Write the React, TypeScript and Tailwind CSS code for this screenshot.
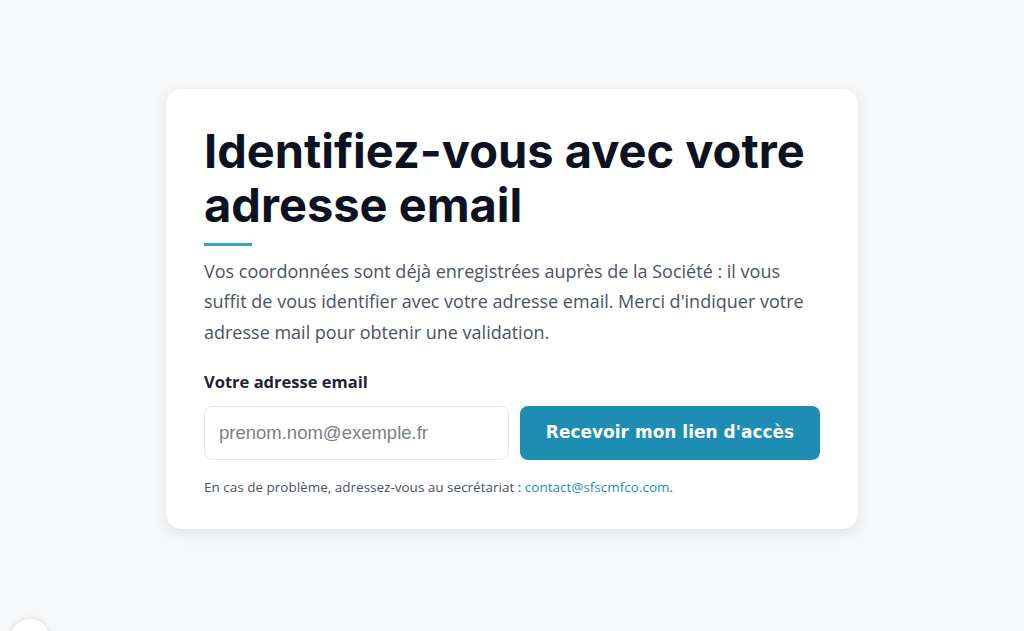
import React, { useState } from 'react';

export default function App() {
  const [email, setEmail] = useState('');

  return (
    <div className="relative min-h-[631px] bg-[#f7f8fa] flex items-center justify-center overflow-hidden">
      <div className="w-[692px] bg-white rounded-2xl shadow-[0_4px_16px_rgba(15,23,42,0.10)] px-[38px] pt-[35px] pb-[32px] -mt-[13px]">
        <h1
          className="text-[47px] leading-[54px] font-bold text-[#0d1220]"
          style={{ fontFamily: 'Inter, "Noto Sans", sans-serif' }}
        >
          Identifiez-vous avec votre adresse email
        </h1>
        <div className="w-[48px] h-[3px] bg-[#3aa3c6] mt-[11px] mb-[10px]" />
        <p
          className="text-[18px] leading-[30.5px] text-[#4a5363]"
          style={{ fontFamily: '"Open Sans", "Noto Sans", sans-serif' }}
        >
          Vos coordonnées sont déjà enregistrées auprès de la Société : il vous suffit de vous identifier avec votre adresse email. Merci d'indiquer votre adresse mail pour obtenir une validation.
        </p>
        <label
          htmlFor="email"
          className="block mt-[23px] mb-[11px] text-[16.5px] font-bold text-[#1e2433]"
          style={{ fontFamily: '"Open Sans", "Noto Sans", sans-serif' }}
        >
          Votre adresse email
        </label>
        <div className="flex gap-[11px]">
          <input
            id="email"
            type="email"
            value={email}
            onChange={(e) => setEmail(e.target.value)}
            placeholder="prenom.nom@exemple.fr"
            className="w-[305px] h-[54px] px-[14px] rounded-lg border border-[#e5e7eb] text-[18.5px] text-[#1f2937] placeholder:text-[#7b7f86] outline-none"
            style={{ fontFamily: '"Liberation Sans", Arial, sans-serif' }}
          />
          <button
            className="w-[300px] h-[54px] rounded-lg bg-[#1e8db3] text-white text-[17px] font-bold"
            style={{ fontFamily: '"DejaVu Sans", sans-serif' }}
          >
            Recevoir mon lien d'accès
          </button>
        </div>
        <p
          className="mt-[17px] text-[13.5px] text-[#4a5363]"
          style={{ fontFamily: '"Open Sans", "Noto Sans", sans-serif' }}
        >
          En cas de problème, adressez-vous au secrétariat :{' '}
          <a href="mailto:contact@sfscmfco.com" className="text-[#1e8db3]">
            contact@sfscmfco.com
          </a>
          .
        </p>
      </div>
      <div className="absolute left-[10px] bottom-[-28px] w-[40px] h-[40px] rounded-full bg-white shadow-[0_0_6px_rgba(0,0,0,0.12)]" />
    </div>
  );
}
